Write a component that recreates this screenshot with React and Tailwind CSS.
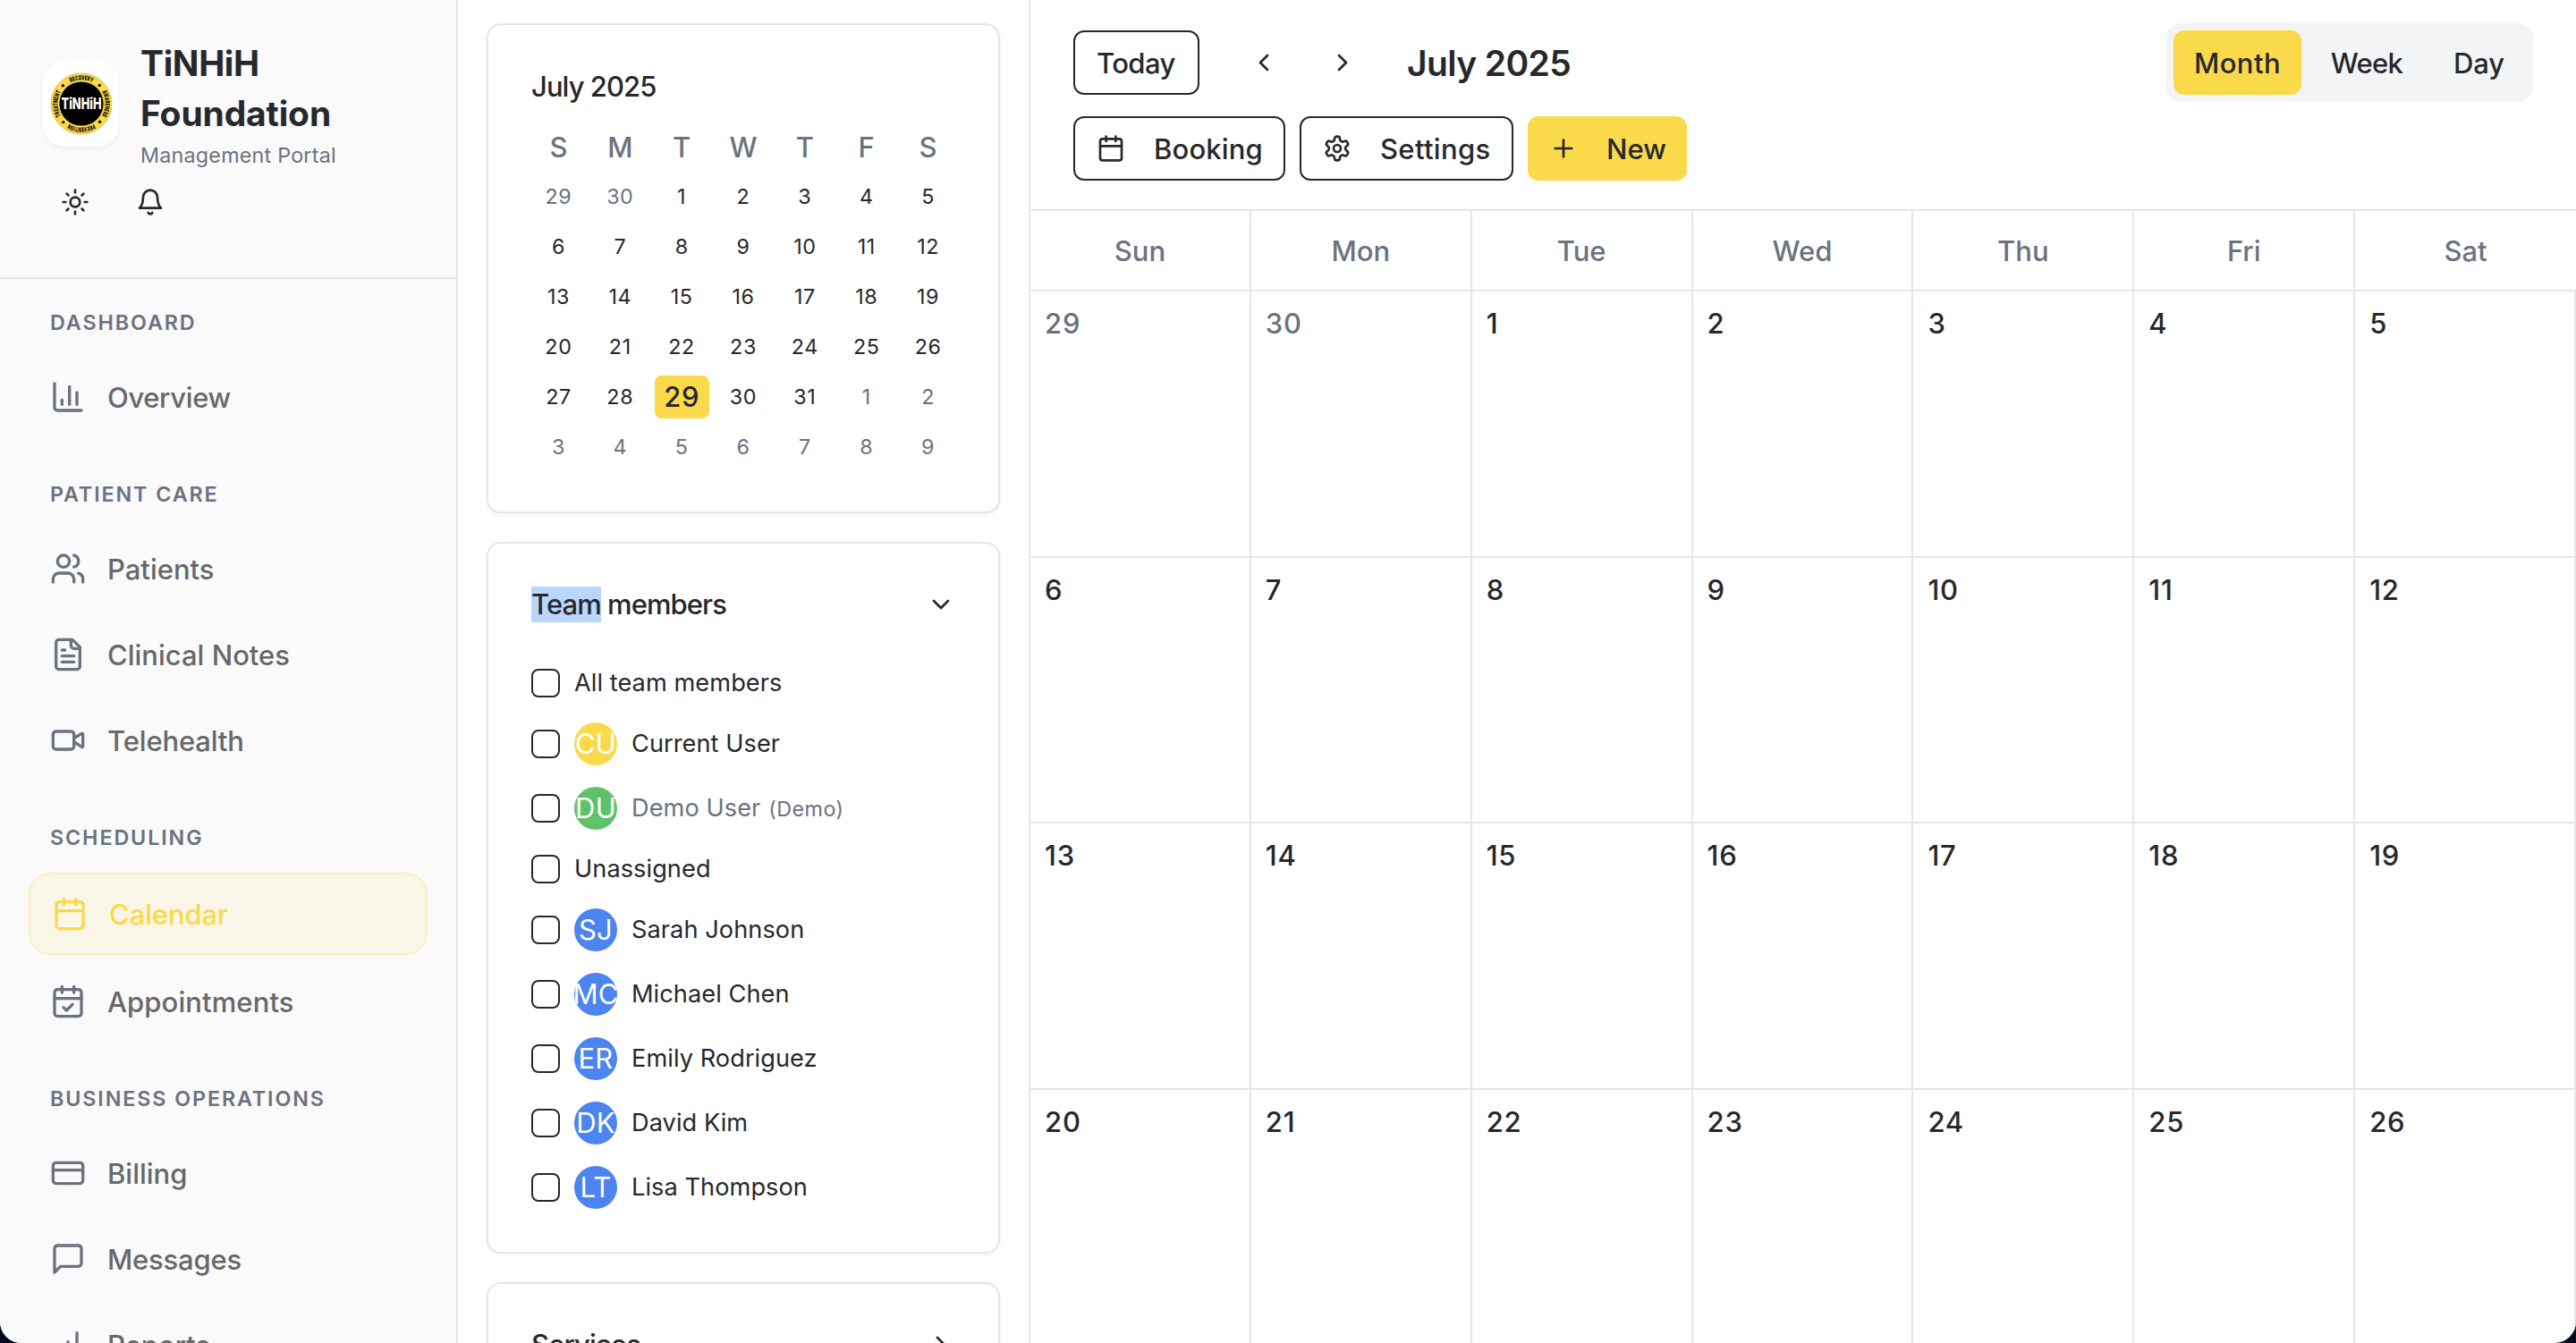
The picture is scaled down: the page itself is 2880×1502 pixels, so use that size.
const YELLOW_BG = 'bg-[#fad94b]'
const SOFT_SHADOW = 'shadow-[0_2px_4px_rgba(0,0,0,0.05)]'

function Icon({ className = 'size-8', children }) {
  return (
    <svg
      viewBox="0 0 24 24"
      fill="none"
      stroke="currentColor"
      strokeWidth="2"
      strokeLinecap="round"
      strokeLinejoin="round"
      className={`shrink-0 ${className}`}
    >
      {children}
    </svg>
  )
}

const glyphs = {
  chart: (
    <>
      <path d="M3 3v16a2 2 0 0 0 2 2h16" />
      <path d="M18 17V9" />
      <path d="M13 17V5" />
      <path d="M8 17v-3" />
    </>
  ),
  users: (
    <>
      <path d="M16 21v-2a4 4 0 0 0-4-4H6a4 4 0 0 0-4 4v2" />
      <circle cx="9" cy="7" r="4" />
      <path d="M22 21v-2a4 4 0 0 0-3-3.87" />
      <path d="M16 3.13a4 4 0 0 1 0 7.75" />
    </>
  ),
  file: (
    <>
      <path d="M15 2H6a2 2 0 0 0-2 2v16a2 2 0 0 0 2 2h12a2 2 0 0 0 2-2V7Z" />
      <path d="M14 2v4a2 2 0 0 0 2 2h4" />
      <path d="M10 9H8" />
      <path d="M16 13H8" />
      <path d="M16 17H8" />
    </>
  ),
  video: (
    <>
      <path d="m16 13 5.223 3.482a.5.5 0 0 0 .777-.416V7.87a.5.5 0 0 0-.752-.432L16 10.5" />
      <rect x="2" y="6" width="14" height="12" rx="2" />
    </>
  ),
  calendar: (
    <>
      <path d="M8 2v4" />
      <path d="M16 2v4" />
      <rect width="18" height="18" x="3" y="4" rx="2" />
      <path d="M3 10h18" />
    </>
  ),
  calendarCheck: (
    <>
      <path d="M8 2v4" />
      <path d="M16 2v4" />
      <rect width="18" height="18" x="3" y="4" rx="2" />
      <path d="M3 10h18" />
      <path d="m9 16 2 2 4-4" />
    </>
  ),
  card: (
    <>
      <rect width="20" height="14" x="2" y="5" rx="2" />
      <path d="M2 10h20" />
    </>
  ),
  message: <path d="M21 15a2 2 0 0 1-2 2H7l-4 4V5a2 2 0 0 1 2-2h14a2 2 0 0 1 2 2z" />,
  bars: (
    <>
      <path d="M12 20V10" />
      <path d="M18 20V4" />
      <path d="M6 20v-4" />
    </>
  ),
  sun: (
    <>
      <circle cx="12" cy="12" r="4" />
      <path d="M12 2v2" />
      <path d="M12 20v2" />
      <path d="m4.93 4.93 1.41 1.41" />
      <path d="m17.66 17.66 1.41 1.41" />
      <path d="M2 12h2" />
      <path d="M20 12h2" />
      <path d="m6.34 17.66-1.41 1.41" />
      <path d="m19.07 4.93-1.41 1.41" />
    </>
  ),
  bell: (
    <>
      <path d="M6 8a6 6 0 0 1 12 0c0 7 3 9 3 9H3s3-2 3-9" />
      <path d="M10.3 21a1.94 1.94 0 0 0 3.4 0" />
    </>
  ),
  gear: (
    <>
      <path d="M12.22 2h-.44a2 2 0 0 0-2 2v.18a2 2 0 0 1-1 1.73l-.43.25a2 2 0 0 1-2 0l-.15-.08a2 2 0 0 0-2.73.73l-.22.38a2 2 0 0 0 .73 2.73l.15.1a2 2 0 0 1 1 1.72v.51a2 2 0 0 1-1 1.74l-.15.09a2 2 0 0 0-.73 2.73l.22.38a2 2 0 0 0 2.73.73l.15-.08a2 2 0 0 1 2 0l.43.25a2 2 0 0 1 1 1.73V20a2 2 0 0 0 2 2h.44a2 2 0 0 0 2-2v-.18a2 2 0 0 1 1-1.73l.43-.25a2 2 0 0 1 2 0l.15.08a2 2 0 0 0 2.73-.73l.22-.39a2 2 0 0 0-.73-2.73l-.15-.08a2 2 0 0 1-1-1.74v-.5a2 2 0 0 1 1-1.74l.15-.09a2 2 0 0 0 .73-2.73l-.22-.38a2 2 0 0 0-2.73-.73l-.15.08a2 2 0 0 1-2 0l-.43-.25a2 2 0 0 1-1-1.73V4a2 2 0 0 0-2-2z" />
      <circle cx="12" cy="12" r="3" />
    </>
  ),
  plus: (
    <>
      <path d="M5 12h14" />
      <path d="M12 5v14" />
    </>
  ),
  left: <path d="m15 18-6-6 6-6" />,
  right: <path d="m9 18 6-6-6-6" />,
  down: <path d="m6 9 6 6 6-6" />,
}

const ringWords = [
  { word: 'RECOVERY', angle: 0, length: 25 },
  { word: 'AWARENESS', angle: 90, length: 28 },
  { word: 'PREVENTION', angle: 180, length: 29 },
  { word: 'TREATMENT', angle: 270, length: 28 },
]

function Logo() {
  return (
    <svg viewBox="-35 -35 70 70" className="size-[70px]">
      <defs>
        <path id="ring" d="M-26.6 0A26.6 26.6 0 0 1 26.6 0" />
      </defs>
      <circle r="34" fill="#fad94b" stroke="#e3c04a" strokeWidth="1" />
      <circle r="24.6" fill="#000" />
      {ringWords.map(({ word, angle, length }) => (
        <g key={word} transform={`rotate(${angle})`}>
          <text fontSize="7.2" fontWeight="900" fill="#111" textLength={length} lengthAdjust="spacingAndGlyphs">
            <textPath
              href="#ring"
              startOffset="50%"
              textAnchor="middle"
              textLength={length}
              lengthAdjust="spacingAndGlyphs"
            >
              {word}
            </textPath>
          </text>
          <circle cx="20.3" cy="-20.6" r="1.7" fill="#111" />
        </g>
      ))}
      <text
        x="-22.5"
        y="6.2"
        fontSize="16.8"
        fontWeight="800"
        fill="#fff"
        textLength="45"
        lengthAdjust="spacingAndGlyphs"
      >
        TiNHiH
      </text>
    </svg>
  )
}

const sections = [
  { title: 'DASHBOARD', items: [{ label: 'Overview', icon: 'chart', tracking: 'tracking-[-0.36px]' }] },
  {
    title: 'PATIENT CARE',
    items: [
      { label: 'Patients', icon: 'users' },
      { label: 'Clinical Notes', icon: 'file' },
      { label: 'Telehealth', icon: 'video', tracking: 'tracking-[-0.15px]' },
    ],
  },
  {
    title: 'SCHEDULING',
    items: [
      { label: 'Calendar', icon: 'calendar', active: true, tracking: 'tracking-[-0.1px]' },
      { label: 'Appointments', icon: 'calendarCheck', tracking: 'tracking-[0.1px]' },
    ],
  },
  {
    title: 'BUSINESS OPERATIONS',
    items: [
      { label: 'Billing', icon: 'card' },
      { label: 'Messages', icon: 'message', tracking: 'tracking-[-0.2px]' },
      { label: 'Reports', icon: 'bars' },
    ],
  },
]

function NavItem({ label, icon, active, tracking = '' }) {
  return (
    <div
      className={`flex shrink-0 items-center gap-6 rounded-3xl px-6 ${
        active
          ? 'h-[92px] border-2 border-[#fbefc2] bg-[#faf6e7] text-[#fad94b]'
          : 'h-[88px] text-[#67686b]'
      }`}
    >
      <Icon className={active ? 'size-10' : 'size-10 text-[#6b7280]'}>{glyphs[icon]}</Icon>
      <span className={`translate-y-px text-[31px] leading-[48px] font-medium ${tracking}`}>{label}</span>
    </div>
  )
}

function Sidebar() {
  return (
    <aside className="flex w-[512px] shrink-0 flex-col overflow-hidden border-r-2 border-[#e5e6eb] bg-[#fafafa]">
      <header className="h-[312px] shrink-0 border-b-2 border-[#e5e6eb] px-12 pt-[42px]">
        <div className="flex items-center gap-6">
          <div
            className={`flex h-24 w-[85px] shrink-0 items-center justify-center rounded-3xl bg-white ${SOFT_SHADOW}`}
          >
            <Logo />
          </div>
          <div>
            <h1 className="translate-y-px text-[39px] leading-[56px] font-bold tracking-[-0.15px]">
              <span className="tracking-[-0.4px]">TiNHiH</span>
              <br />
              Foundation
            </h1>
            <p className="mt-1 text-[23.3px] leading-8 tracking-[0.22px] text-[#6b7280]">Management Portal</p>
          </div>
        </div>
        <div className="flex gap-3">
          <button className="flex size-[72px] items-center justify-center">
            <Icon>{glyphs.sun}</Icon>
          </button>
          <button className="flex size-[72px] items-center justify-center">
            <Icon>{glyphs.bell}</Icon>
          </button>
        </div>
      </header>
      <nav className="flex flex-col gap-12 px-8 pt-8">
        {sections.map((s) => (
          <section key={s.title}>
            <h2 className="mb-6 translate-y-px px-6 text-[23.3px] leading-8 font-semibold tracking-[1.9px] text-[#6b7280]">
              {s.title}
            </h2>
            <div className="flex flex-col gap-2">
              {s.items.map((i) => (
                <NavItem key={i.label} {...i} />
              ))}
            </div>
          </section>
        ))}
      </nav>
    </aside>
  )
}

function Card({ children }) {
  return (
    <section className={`shrink-0 rounded-2xl border-2 border-[#e5e6eb] bg-white p-12 ${SOFT_SHADOW}`}>
      {children}
    </section>
  )
}

const miniDays = [29, 30, ...Array.from({ length: 31 }, (_, i) => i + 1), 1, 2, 3, 4, 5, 6, 7, 8, 9]

function MiniCalendar() {
  return (
    <Card>
      <h3 className="mb-6 translate-y-px text-[31px] leading-10 font-medium tracking-[-0.95px]">July 2025</h3>
      <div className="grid grid-cols-7 gap-2 text-center">
        {['S', 'M', 'T', 'W', 'T', 'F', 'S'].map((d, i) => (
          <div key={i} className="translate-y-px text-[31px] leading-[48px] font-medium text-[#6b7280]">
            {d}
          </div>
        ))}
        {miniDays.map((d, i) => {
          if (i === 30)
            return (
              <div
                key={i}
                className={`rounded-lg text-[31px] leading-[48px] font-medium tracking-[0.6px] ${YELLOW_BG}`}
              >
                {d}
              </div>
            )
          const outside = i < 2 || i > 32
          return (
            <div
              key={i}
              className={`text-[23.3px] leading-[48px] tracking-[0.6px] ${outside ? 'text-[#6b7280]' : ''}`}
            >
              {d}
            </div>
          )
        })}
      </div>
    </Card>
  )
}

const members = [
  { name: 'All team members' },
  { name: 'Current User', initials: 'CU', color: 'bg-[#fad94b]' },
  { name: 'Demo User', initials: 'DU', color: 'bg-[#5fc26b]', demo: true },
  { name: 'Unassigned' },
  { name: 'Sarah Johnson', initials: 'SJ', color: 'bg-[#4c84f0]' },
  { name: 'Michael Chen', initials: 'MC', color: 'bg-[#4c84f0]' },
  { name: 'Emily Rodriguez', initials: 'ER', color: 'bg-[#4c84f0]' },
  { name: 'David Kim', initials: 'DK', color: 'bg-[#4c84f0]' },
  { name: 'Lisa Thompson', initials: 'LT', color: 'bg-[#4c84f0]' },
]

function TeamMembers() {
  return (
    <Card>
      <div className="mb-12 flex h-10 items-center justify-between">
        <h3 className="text-[31px] leading-10 font-medium tracking-[-0.93px]">
          <span className="inline-block bg-[#b9d6fb]">Team</span> members
        </h3>
        <Icon>{glyphs.down}</Icon>
      </div>
      <ul className="flex flex-col gap-6">
        {members.map((m) => (
          <li key={m.name} className={`flex items-center gap-4 ${m.initials ? 'h-12' : 'h-10'}`}>
            <span className="size-8 shrink-0 rounded-lg border-2 border-[#27282c]" />
            {m.initials && (
              <span
                className={`flex size-12 shrink-0 items-center justify-center overflow-hidden rounded-full text-[31px] tracking-[0.2px] text-white ${m.color}`}
              >
                {m.initials}
              </span>
            )}
            <span className={`text-[27.2px] leading-10 tracking-[0.05px] ${m.demo ? 'text-[#6b7280]' : ''}`}>
              {m.name}
              {m.demo && <span className="ml-[9px] text-[23.3px] tracking-[0.45px]">(Demo)</span>}
            </span>
          </li>
        ))}
      </ul>
    </Card>
  )
}

function Services() {
  return (
    <Card>
      <div className="flex h-10 items-center justify-between">
        <h3 className="text-[31px] leading-10 font-medium tracking-[-0.9px]">Services</h3>
        <Icon>{glyphs.right}</Icon>
      </div>
    </Card>
  )
}

function OutlineButton({ icon, label, tracking, width }) {
  return (
    <button
      className={`flex h-[72px] items-center gap-8 rounded-xl border-2 border-[#27282c] px-6 text-[31px] font-medium ${width} ${tracking}`}
    >
      {icon && <Icon>{glyphs[icon]}</Icon>}
      <span className="translate-y-px">{label}</span>
    </button>
  )
}

const views = [
  { label: 'Month', style: 'w-[143px] tracking-[0.4px] bg-[#fad94b]' },
  { label: 'Week', style: 'w-[130px] tracking-[-0.7px]' },
  { label: 'Day', style: 'w-[105px] tracking-[-0.1px]' },
]

function Toolbar() {
  return (
    <header className="flex h-[236px] shrink-0 flex-col gap-4 border-b-2 border-[#e5e6eb] px-12 pt-[26px]">
      <div className="flex h-[88px] items-center justify-between">
        <div className="flex items-center gap-8">
          <OutlineButton label="Today" width="w-[141px]" tracking="tracking-[-0.6px]" />
          <div className="flex gap-2">
            <button className="flex h-[72px] w-20 items-center justify-center">
              <Icon>{glyphs.left}</Icon>
            </button>
            <button className="flex h-[72px] w-20 items-center justify-center">
              <Icon>{glyphs.right}</Icon>
            </button>
          </div>
          <h2 className="translate-y-px text-[39px] leading-[56px] font-semibold tracking-[-0.6px]">July 2025</h2>
        </div>
        <div className="flex gap-2 rounded-2xl bg-gray-100 p-2 text-[31px] font-medium">
          {views.map(({ label, style }) => (
            <button key={label} className={`flex h-[72px] items-center justify-center rounded-xl ${style}`}>
              <span className="translate-y-px">{label}</span>
            </button>
          ))}
        </div>
      </div>
      <div className="flex gap-4">
        <OutlineButton icon="calendar" label="Booking" width="w-[237px]" tracking="tracking-[0.15px]" />
        <OutlineButton icon="gear" label="Settings" width="w-[239px]" tracking="tracking-[0.33px]" />
        <button
          className={`flex h-[72px] w-[178px] items-center gap-8 rounded-xl px-6 text-[31px] font-medium ${YELLOW_BG}`}
        >
          <Icon>{glyphs.plus}</Icon>
          <span className="translate-y-px">New</span>
        </button>
      </div>
    </header>
  )
}

const monthDays = [29, 30, ...Array.from({ length: 26 }, (_, i) => i + 1)]

function MonthView() {
  return (
    <div className="min-h-0 grow overflow-hidden">
      <div className="grid h-[90px] grid-cols-7 border-b-2 border-[#e5e6eb]">
        {['Sun', 'Mon', 'Tue', 'Wed', 'Thu', 'Fri', 'Sat'].map((d) => (
          <div
            key={d}
            className="flex items-center justify-center border-r-2 border-[#e5e6eb] text-[31px] font-medium text-[#6b7280] last:border-r-0"
          >
            <span className="translate-y-px">{d}</span>
          </div>
        ))}
      </div>
      <div className="grid auto-rows-[297.66px] grid-cols-7">
        {monthDays.map((d, i) => (
          <div
            key={i}
            className={`border-r-2 border-b-2 border-[#e5e6eb] p-4 text-[31px] leading-10 font-medium tracking-[0.8px] ${
              i < 2 ? 'text-[#6b7280]' : ''
            }`}
          >
            {d}
          </div>
        ))}
      </div>
    </div>
  )
}

export default function App() {
  return (
    <div className="h-[1502px] w-[2880px] overflow-hidden bg-[#050a1c]">
      <div className="flex h-full overflow-hidden rounded-b-3xl bg-white font-[Inter,sans-serif] text-[#27282c]">
        <Sidebar />
        <div className="flex w-[640px] shrink-0 flex-col gap-8 overflow-hidden border-r-2 border-[#e5e6eb] px-8 pt-[26px]">
          <MiniCalendar />
          <TeamMembers />
          <Services />
        </div>
        <main className="flex min-w-0 grow flex-col">
          <Toolbar />
          <MonthView />
        </main>
      </div>
    </div>
  )
}
